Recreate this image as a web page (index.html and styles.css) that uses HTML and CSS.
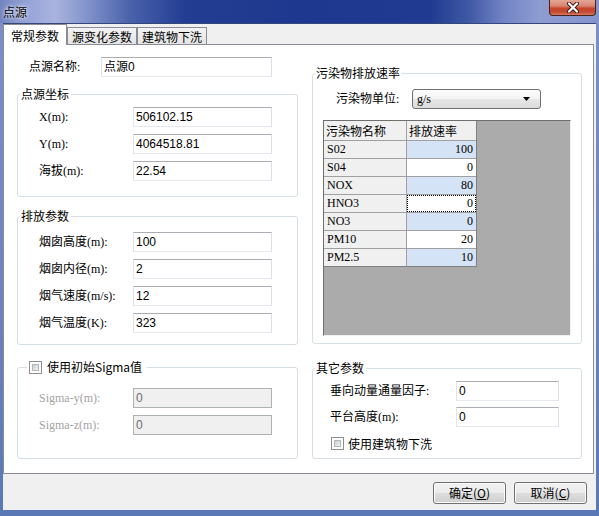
FILE: index.html
```html
<!DOCTYPE html>
<html>
<head>
<meta charset="utf-8">
<link rel="stylesheet" href="styles.css">
</head>
<body>
<div class="window">
  <div class="titlebar">
    <span class="title">点源</span>
    <div class="close">
      <svg width="14" height="11" viewBox="0 0 14 11">
        <path d="M3 1.5 L11 9.5 M11 1.5 L3 9.5" stroke="#3a1a14" stroke-width="4" stroke-linecap="round"/>
        <path d="M3 1.5 L11 9.5 M11 1.5 L3 9.5" stroke="#ffffff" stroke-width="2.2" stroke-linecap="round"/>
      </svg>
    </div>
  </div>
  <div class="client">
    <div class="tabs">
      <div class="tab active">常规参数</div>
      <div class="tab">源变化参数</div>
      <div class="tab">建筑物下洗</div>
    </div>
    <div class="panel">
      <div class="col left">
        <div class="row name-row">
          <span class="lbl name-lbl">点源名称:</span>
          <div class="tb name-tb">点源0</div>
        </div>

        <div class="group g1">
          <div class="gtitle">点源坐标</div>
          <div class="rows">
            <div class="row"><span class="lbl w94">X(m):</span><div class="tb w139">506102.15</div></div>
            <div class="row"><span class="lbl w94">Y(m):</span><div class="tb w139">4064518.81</div></div>
            <div class="row"><span class="lbl w94">海拔(m):</span><div class="tb w139">22.54</div></div>
          </div>
        </div>

        <div class="group g2">
          <div class="gtitle">排放参数</div>
          <div class="rows">
            <div class="row"><span class="lbl w94">烟囱高度(m):</span><div class="tb w139">100</div></div>
            <div class="row"><span class="lbl w94">烟囱内径(m):</span><div class="tb w139">2</div></div>
            <div class="row"><span class="lbl w94">烟气速度(m/s):</span><div class="tb w139">12</div></div>
            <div class="row"><span class="lbl w94">烟气温度(K):</span><div class="tb w139">323</div></div>
          </div>
        </div>

        <div class="group g3">
          <div class="gtitle cbtitle"><span class="cb"></span><span>使用初始Sigma值</span></div>
          <div class="rows">
            <div class="row"><span class="lbl w94 dis">Sigma-y(m):</span><div class="tb w139 tbdis">0</div></div>
            <div class="row"><span class="lbl w94 dis">Sigma-z(m):</span><div class="tb w139 tbdis">0</div></div>
          </div>
        </div>
      </div>

      <div class="col right">
        <div class="group gA">
          <div class="gtitle">污染物排放速率</div>
          <div class="row combo-row">
            <span class="lbl combo-lbl">污染物单位:</span>
            <div class="combo">
              <span class="combo-text">g/s</span>
              <svg width="7" height="4" viewBox="0 0 7 4"><polygon points="0,0 7,0 3.5,4" fill="#000"/></svg>
            </div>
          </div>
          <div class="grid-area">
            <div class="gt">
              <div class="c hd">污染物名称</div><div class="c hd">排放速率</div>
              <div class="c nm">S02</div><div class="c v blue">100</div>
              <div class="c nm">S04</div><div class="c v">0</div>
              <div class="c nm">NOX</div><div class="c v blue">80</div>
              <div class="c nm">HNO3</div><div class="c v focus">0</div>
              <div class="c nm">NO3</div><div class="c v blue">0</div>
              <div class="c nm">PM10</div><div class="c v">20</div>
              <div class="c nm">PM2.5</div><div class="c v blue">10</div>
            </div>
          </div>
        </div>

        <div class="group gB">
          <div class="gtitle">其它参数</div>
          <div class="rows rowsB">
            <div class="row"><span class="lbl w126">垂向动量通量因子:</span><div class="tb w103">0</div></div>
            <div class="row"><span class="lbl w126">平台高度(m):</span><div class="tb w103">0</div></div>
          </div>
          <div class="cbrow"><span class="cb"></span><span>使用建筑物下洗</span></div>
        </div>
      </div>
    </div>
    <div class="footer">
      <div class="btn">确定(<u>O</u>)</div>
      <div class="btn">取消(<u>C</u>)</div>
    </div>
  </div>
</div>
</body>
</html>
```

FILE: styles.css
```css
body {
  margin: 0;
  font-family: "Noto Sans CJK SC", sans-serif;
  font-size: 12px;
  line-height: 14px;
  color: #000;
}

.window {
  width: 599px;
  height: 516px;
  display: flex;
  flex-direction: column;
  background: linear-gradient(180deg, #7d8fcb 0%, #6c82c0 60%, #5b78b6 100%);
  overflow: hidden;
}

.titlebar {
  height: 23px;
  flex: none;
  display: flex;
  justify-content: space-between;
  align-items: flex-start;
  background: linear-gradient(90deg, #7284c0 0px, #98a5d8 30px, #a9b3de 55px, #8595cc 85px, #4a62ab 130px, #233d92 185px, #1e388f 300px, #1f3a90 430px, #415aa6 470px, #7385c5 505px, #8e9cd2 540px, #8594cd 599px);
}

.title {
  margin: 4px 0 0 3px;
  font-size: 12px;
  line-height: 15px;
  color: #000;
  text-shadow: 0 0 3px #fff, 0 0 6px #dfe6ff;
}

.close {
  width: 47px;
  height: 16px;
  box-sizing: border-box;
  margin-right: 3px;
  border: 1px solid #46231d;
  border-top: 0;
  border-radius: 0 0 4px 4px;
  background: linear-gradient(180deg, #e4a796 0%, #d98572 40%, #c7452c 55%, #c24a32 80%, #d77a5f 100%);
  display: flex;
  align-items: center;
  justify-content: center;
}

.client {
  margin: 0 3px;
  height: 487px;
  flex: none;
  box-sizing: border-box;
  border-top: 1px solid #34467c;
  background: #f0f0f0;
  display: flex;
  flex-direction: column;
}

/* Tabs */
.tabs {
  height: 20px;
  flex: none;
  display: flex;
  align-items: flex-end;
  position: relative;
  z-index: 1;
}

.tab {
  box-sizing: border-box;
  width: 70px;
  height: 17px;
  border: 1px solid #898c95;
  border-bottom: 0;
  background: linear-gradient(180deg, #f3f3f3, #e4e4e4);
  text-align: center;
  padding-top: 1px;
  line-height: 15px;
}

.tab.active {
  width: 64px;
  height: 21px;
  margin-bottom: -1px;
  background: #fff;
  padding-top: 3px;
}

/* Panel */
.panel {
  height: 430px;
  width: 591px;
  flex: none;
  box-sizing: border-box;
  border: 1px solid #898c95;
  background: #fff;
  display: flex;
  gap: 14px;
  padding-left: 13px;
}

.col {
  display: flex;
  flex-direction: column;
}

.col.left {
  width: 281px;
  padding-top: 12px;
}

.col.right {
  width: 270px;
  padding-top: 28px;
}

.row {
  height: 20px;
  display: flex;
  align-items: center;
}

.lbl {
  font-family: "Liberation Serif", "Noto Sans CJK SC", serif;
  flex: none;
}

.dis {
  color: #a3a3a3;
}

.name-lbl {
  margin-left: 12px;
  width: 72px;
}

.w94 { width: 94px; }
.w126 { width: 126px; }

.tb {
  box-sizing: border-box;
  height: 20px;
  border: 1px solid;
  border-color: #abadb3 #dbdfe6 #e3e9ef #e2e3ea;
  background: #fff;
  padding: 0 2px;
  line-height: 18px;
  font-family: "Liberation Sans", "Noto Sans CJK SC", sans-serif;
  font-size: 12px;
  flex: none;
}

.tbdis {
  background: #f0f0f0;
  border-color: #adb2b5;
  color: #6d6d6d;
}

.name-tb { width: 171px; }
.w139 { width: 139px; }
.w103 { width: 103px; }

/* Group boxes */
.group {
  box-sizing: border-box;
  border: 1px solid #d5dfe5;
  border-radius: 3px;
}

.gtitle {
  height: 14px;
  line-height: 14px;
  margin: -8px 0 0 2px;
  padding: 0 2px 0 1px;
  width: max-content;
  background: #fff;
}

.cbtitle {
  display: flex;
  align-items: center;
  gap: 5px;
  margin-left: 9px;
  padding: 0 5px 0 2px;
}

.rows {
  display: flex;
  flex-direction: column;
  gap: 7px;
  padding-left: 21px;
}

.g1 { margin-top: 17px; }
.g1 .rows { margin-top: 6px; padding-bottom: 15px; }

.g2 { margin-top: 19px; }
.g2 .rows { margin-top: 9px; padding-bottom: 11px; }

.g3 { margin-top: 22px; }
.g3 .rows { margin-top: 14px; padding-bottom: 23px; }

/* checkbox */
.cb {
  width: 13px;
  height: 13px;
  box-sizing: border-box;
  border: 1px solid #8f8f8f;
  background: #fff;
  padding: 2px;
  flex: none;
  display: block;
}

.cb::after {
  content: "";
  display: block;
  width: 7px;
  height: 7px;
  box-sizing: border-box;
  border: 1px solid #b4b8bd;
  background: linear-gradient(135deg, #c9ccd1, #f4f4f4);
}

/* right group A */
.combo-row {
  margin-top: 9px;
  padding-left: 23px;
}

.combo-lbl { width: 76px; }

.combo {
  box-sizing: border-box;
  width: 129px;
  height: 20px;
  border: 1px solid #707070;
  border-radius: 3px;
  background: linear-gradient(180deg, #fcfcfc 0%, #f3f3f3 50%, #e6e6e6 51%, #dcdcdc 100%);
  display: flex;
  align-items: center;
  justify-content: space-between;
  padding: 0 10px 0 4px;
}

.combo-text {
  font-family: "Liberation Serif", serif;
}

.grid-area {
  margin: 11px 0 7px 10px;
  width: 248px;
  height: 216px;
  box-sizing: border-box;
  background: #ababab;
  border: 1px solid;
  border-color: #6f6f6f #f0f0f0 #f0f0f0 #6f6f6f;
}

.gt {
  display: grid;
  grid-template-columns: 82px 69px;
  grid-template-rows: 19px repeat(7, 17px);
  gap: 1px;
  background: #a0a0a0;
  width: max-content;
  border-right: 1px solid #808080;
  border-bottom: 1px solid #808080;
}

.c {
  background: #fff;
  line-height: 17px;
  font-family: "Liberation Serif", "Noto Sans CJK SC", serif;
  padding: 0 3px;
  white-space: nowrap;
}

.hd {
  background: #f0f0f0;
  line-height: 19px;
  padding: 0 2px;
  font-family: "Noto Sans CJK SC", sans-serif;
}

.nm {
  background: #f0f0f0;
}

.v {
  text-align: right;
}

.blue {
  background: #d5e3f6;
}

.focus {
  outline: 1px dotted #000;
  outline-offset: -1px;
}

/* right group B */
.gB { margin-top: 24px; }

.rowsB {
  margin-top: 6px;
  gap: 6px;
  padding-left: 17px;
}

.cbrow {
  margin-top: 10px;
  margin-bottom: 8px;
  height: 13px;
  display: flex;
  align-items: center;
  gap: 4px;
  padding-left: 18px;
}

/* footer */
.footer {
  flex: none;
  display: flex;
  justify-content: flex-end;
  gap: 8px;
  padding: 8px 9px 0 0;
}

.btn {
  box-sizing: border-box;
  width: 73px;
  height: 22px;
  border: 1px solid #707070;
  border-radius: 3px;
  background: linear-gradient(180deg, #f2f2f2 0%, #ebebeb 50%, #dddddd 51%, #cfcfcf 100%);
  box-shadow: inset 0 0 0 1px #fbfbfb;
  text-align: center;
  line-height: 20px;
}
```
